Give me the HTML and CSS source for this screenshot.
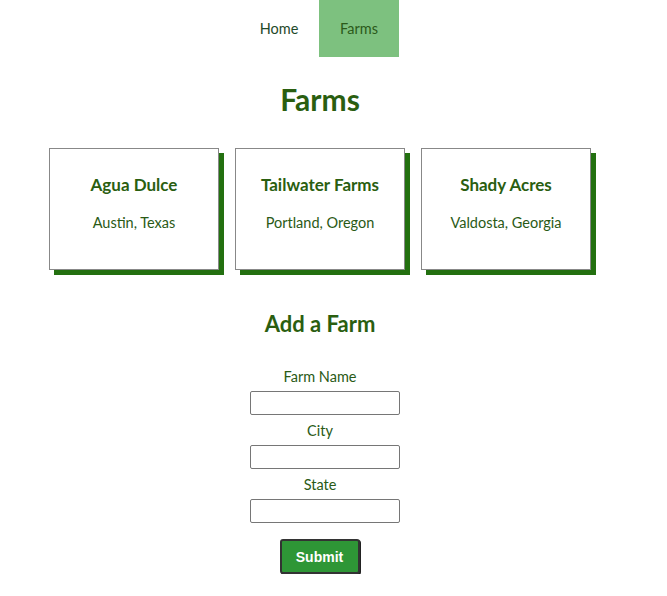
FILE: index.html
```html
<!DOCTYPE html>
<html>
<head>
<meta charset="utf-8">
<link rel="stylesheet" href="styles.css">
</head>
<body>
<div class="page">
  <nav class="nav">
    <a class="tab">Home</a>
    <a class="tab active">Farms</a>
  </nav>
  <h1 class="title">Farms</h1>
  <div class="cards">
    <div class="card"><h3>Agua Dulce</h3><p>Austin, Texas</p></div>
    <div class="card"><h3>Tailwater Farms</h3><p>Portland, Oregon</p></div>
    <div class="card"><h3>Shady Acres</h3><p>Valdosta, Georgia</p></div>
  </div>
  <h2 class="subtitle">Add a Farm</h2>
  <form class="form">
    <label class="label">Farm Name</label>
    <input class="field" type="text">
    <label class="label">City</label>
    <input class="field" type="text">
    <label class="label">State</label>
    <input class="field" type="text">
    <button class="submit" type="button">Submit</button>
  </form>
</div>
</body>
</html>
```
FILE: styles.css
```css
html, body { margin: 0; padding: 0; background: #fff; }
body { font-family: Lato, "Open Sans", sans-serif; color: #2a5a16; }
.page { width: 640px; display: flex; flex-direction: column; align-items: center; }
.nav { display: flex; height: 57px; margin-left: -2px; }
.tab { width: 80px; display: flex; align-items: center; justify-content: center; font-size: 14.5px; color: #1f4a2a; padding-bottom: 1px; }
.tab.active { background: #7dc17f; color: #2b5a1a; }
.title { margin: 16px 0 0; font-size: 30px; line-height: 52px; font-weight: 700; color: #2a5e10; }
.cards { display: flex; gap: 16px; margin-top: 23px; }
.card { width: 168px; height: 120px; border: 1px solid #888; box-shadow: 5px 5px 0 #237010; display: flex; flex-direction: column; align-items: center; background: #fff; }
.card h3 { margin: 24px 0 0; font-size: 17px; line-height: 24px; font-weight: 700; color: #2a5e10; }
.card p { margin: 17px 0 0; font-size: 14.5px; line-height: 18px; color: #2a5a16; }
.subtitle { margin: 39px 0 0; font-size: 22px; line-height: 30px; font-weight: 700; color: #2a5e10; }
.form { display: flex; flex-direction: column; align-items: center; margin-top: 29px; }
.label { font-size: 14.5px; line-height: 18px; color: #2a5a16; }
.field { box-sizing: border-box; width: 150px; height: 24px; margin: 5px 0 7px 9px; border: 1px solid #767676; border-radius: 2px; padding: 0; }
.submit { box-sizing: border-box; width: 80px; height: 35px; margin-top: 9px; background: #2e9636; color: #fff; font-family: "Liberation Sans", Arial, sans-serif; font-weight: 700; font-size: 14px; border: 2px solid #333; border-radius: 3px; box-shadow: 1px 1px 0 #222; margin-left: -1px; }
```
